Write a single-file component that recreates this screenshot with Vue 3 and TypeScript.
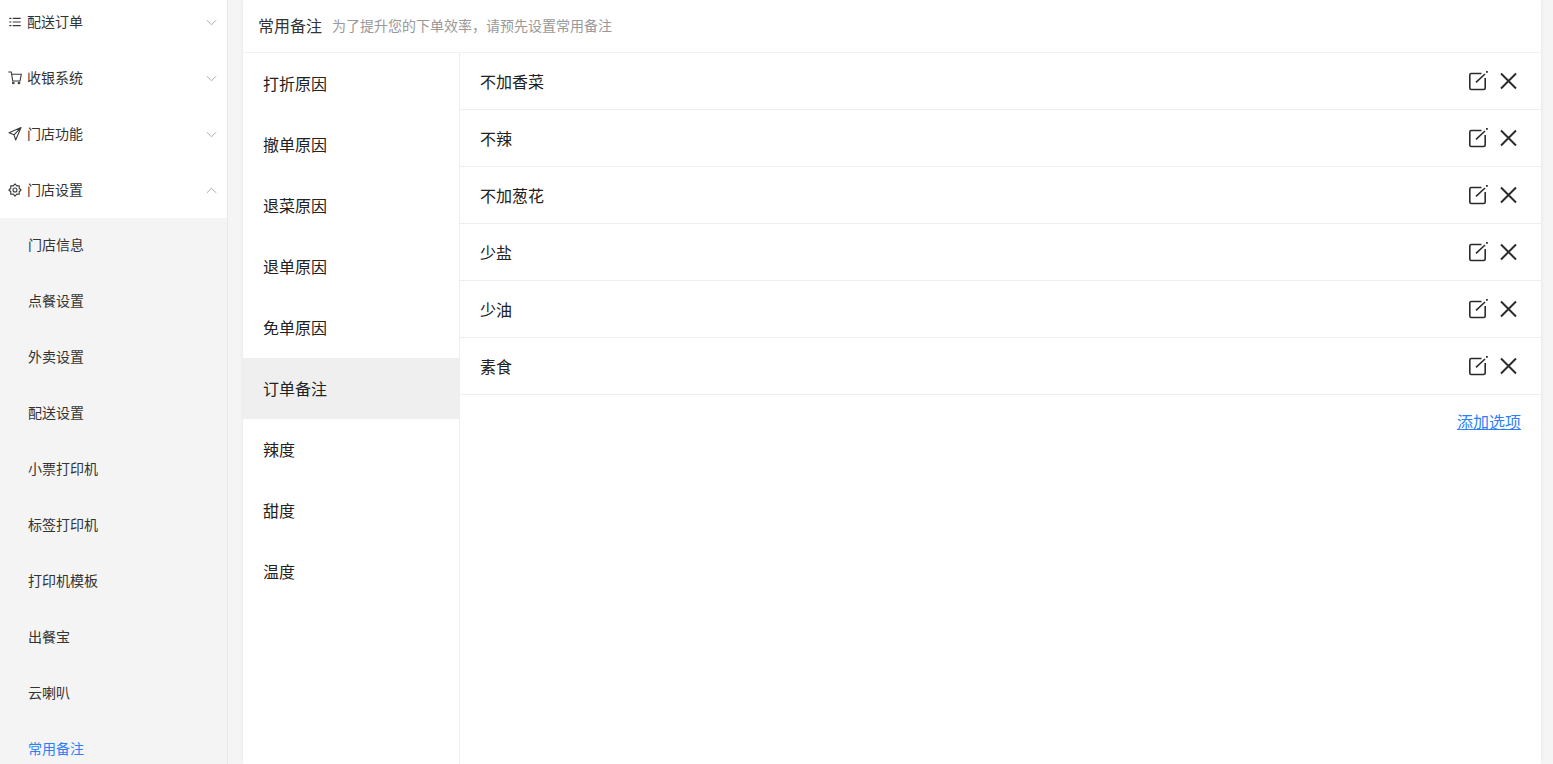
<script setup lang="ts">
const topMenus = [
  { label: '配送订单', icon: 'list', open: false },
  { label: '收银系统', icon: 'cart', open: false },
  { label: '门店功能', icon: 'send', open: false },
  { label: '门店设置', icon: 'gear', open: true },
]
const subMenus = ['门店信息', '点餐设置', '外卖设置', '配送设置', '小票打印机', '标签打印机', '打印机模板', '出餐宝', '云喇叭', '常用备注']
const categories = ['打折原因', '撤单原因', '退菜原因', '退单原因', '免单原因', '订单备注', '辣度', '甜度', '温度']
const options = ['不加香菜', '不辣', '不加葱花', '少盐', '少油', '素食']

const gearPath = (() => {
  const pts: string[] = []
  for (let i = 0; i < 16; i++) {
    const a = (i * Math.PI) / 8 + Math.PI / 2
    const r = i % 2 === 0 ? 6.1 : 4.5
    pts.push(`${(7 + r * Math.cos(a)).toFixed(2)} ${(7 + r * Math.sin(a)).toFixed(2)}`)
  }
  return `M${pts.join('L')}Z`
})()
</script>

<template>
  <div class="page">
    <aside class="sidebar">
      <div v-for="m in topMenus" :key="m.label" class="menu-item">
        <svg class="menu-icon" viewBox="0 0 14 14" width="14" height="14" fill="none" stroke="#3a3a3a" stroke-width="1.1">
          <template v-if="m.icon === 'list'">
            <path d="M4.7 3.4H12.7M4.7 7H12.7M4.7 10.6H12.7M1.3 3.4H3.4M1.3 7H3.4M1.3 10.6H3.4" />
          </template>
          <template v-else-if="m.icon === 'cart'">
            <path d="M.3 1H3.3L4.7 10H12L13.3 3.3H3.7" />
            <circle cx="5.3" cy="12" r=".8" />
            <circle cx="11" cy="12" r=".8" />
          </template>
          <template v-else-if="m.icon === 'send'">
            <path d="M13 .6L1 5.7L6 7.8L7.7 13ZM13 .6L6 7.8" stroke-linejoin="round" />
          </template>
          <template v-else>
            <path :d="gearPath" stroke-linejoin="round" />
            <circle cx="7" cy="7" r="2" />
          </template>
        </svg>
        <span class="menu-label">{{ m.label }}</span>
        <svg class="chevron" viewBox="0 0 12 8" width="11" height="7" fill="none" stroke="#a8a8a8" stroke-width="1.1">
          <path :d="m.open ? 'M.8 6.6L6 1.4L11.2 6.6' : 'M.8 1.4L6 6.6L11.2 1.4'" />
        </svg>
      </div>
      <div class="submenu">
        <div v-for="s in subMenus" :key="s" class="sub-item" :class="{ active: s === '常用备注' }">{{ s }}</div>
      </div>
    </aside>

    <main class="card">
      <header class="card-head">
        <span class="title">常用备注</span>
        <span class="hint">为了提升您的下单效率，请预先设置常用备注</span>
      </header>
      <div class="card-body">
        <nav class="cats">
          <div v-for="c in categories" :key="c" class="cat" :class="{ active: c === '订单备注' }">{{ c }}</div>
        </nav>
        <section class="opts">
          <div v-for="o in options" :key="o" class="opt">
            <span class="opt-name">{{ o }}</span>
            <svg class="act-edit" viewBox="0 0 20 20" width="20" height="20" fill="none" stroke="#2b2b2b" stroke-width="1.6">
              <path d="M13.5 2.5H3.3C2.4 2.5 1.8 3.1 1.8 4V17C1.8 17.9 2.4 18.5 3.3 18.5H15.7C16.6 18.5 17.2 17.9 17.2 17V7" />
              <path d="M8 11.3L17 3" />
              <path d="M18 0H19.8V1.8H18Z" fill="#2b2b2b" stroke="none" />
            </svg>
            <svg class="act-close" viewBox="0 0 18 18" width="18" height="18" fill="none" stroke="#2b2b2b" stroke-width="2">
              <path d="M2 1.5L17 16.5M17 1.5L2 16.5" />
            </svg>
          </div>
          <div class="add-row"><a class="add">添加选项</a></div>
        </section>
      </div>
    </main>
  </div>
</template>

<style scoped>
.page {
  display: flex;
  height: 764px;
  overflow: hidden;
  background: #f5f5f5;
  font-family: "Noto Sans CJK SC", "Noto Sans", sans-serif;
  color: #333;
}
.sidebar {
  flex: 0 0 228px;
  box-sizing: border-box;
  height: 764px;
  overflow: hidden;
  background: #fff;
  border-right: 1px solid #e8e8e8;
}
.menu-item {
  display: flex;
  align-items: center;
  height: 56px;
  padding: 0 10px 0 8px;
}
.menu-item:first-child {
  margin-top: -6px;
}
.menu-icon {
  flex: none;
  margin-right: 5px;
}
.menu-label {
  flex: 1;
  font-size: 14px;
  line-height: 20px;
  padding-bottom: 3px;
  color: #333;
}
.chevron {
  flex: none;
}
.submenu {
  background: #f4f4f4;
}
.sub-item {
  height: 56px;
  line-height: 53px;
  padding-left: 28px;
  font-size: 14px;
  color: #333;
}
.sub-item.active {
  color: #2d7ff9;
}
.card {
  display: flex;
  flex-direction: column;
  width: 1298px;
  margin-left: 15px;
  background: #fff;
  box-shadow: 0 0 4px rgba(0, 0, 0, 0.08);
}
.card-head {
  display: flex;
  align-items: center;
  flex: none;
  box-sizing: border-box;
  height: 53px;
  padding: 0 0 2px 15px;
  border-bottom: 1px solid #f2f2f2;
}
.title {
  font-size: 16px;
  line-height: 24px;
  color: #333;
}
.hint {
  margin-left: 10px;
  font-size: 14px;
  line-height: 24px;
  color: #999;
}
.card-body {
  display: flex;
  flex: 1;
  min-height: 0;
}
.cats {
  flex: 0 0 217px;
  box-sizing: border-box;
  border-right: 1px solid #eee;
}
.cat {
  height: 61px;
  line-height: 61px;
  padding-left: 20px;
  font-size: 16px;
  color: #222;
}
.cat.active {
  background: #efefef;
}
.opts {
  flex: 1;
  min-width: 0;
}
.opt {
  display: flex;
  align-items: center;
  height: 57px;
  box-sizing: border-box;
  padding: 0 24px 0 20px;
  border-bottom: 1px solid #eee;
}
.opt-name {
  flex: 1;
  font-size: 16px;
  line-height: 24px;
  color: #222;
}
.act-edit {
  flex: none;
  margin-right: 11px;
}
.act-close {
  flex: none;
}
.add-row {
  display: flex;
  justify-content: flex-end;
  padding: 14px 20px 0 0;
}
.add {
  font-size: 16px;
  line-height: 24px;
  color: #2d7ff9;
  text-decoration: underline;
}
</style>

<style>
html, body {
  margin: 0;
  overflow: hidden;
}
</style>
